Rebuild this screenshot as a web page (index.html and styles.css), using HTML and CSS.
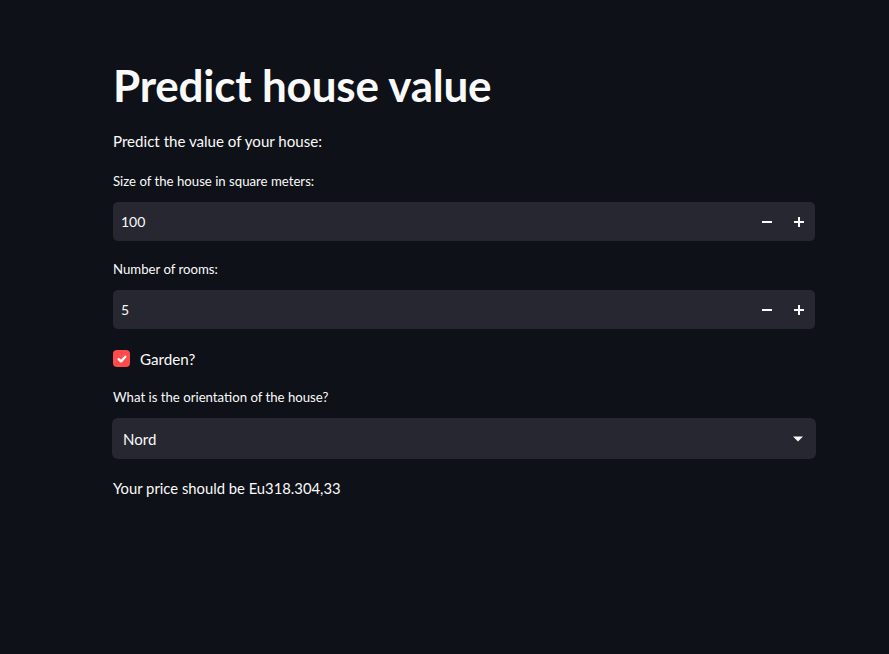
FILE: index.html
```html
<!DOCTYPE html>
<html>
<head>
<meta charset="utf-8">
<link rel="stylesheet" href="styles.css">
</head>
<body>
<main class="main">
  <h1 class="title">Predict house value</h1>
  <p class="intro">Predict the value of your house:</p>

  <div class="field">
    <label class="label">Size of the house in square meters:</label>
    <div class="number">
      <span class="number-value">100</span>
      <div class="steps">
        <button class="step"><svg width="10" height="10" viewBox="0 0 10 10"><rect x="0" y="4" width="10" height="2" fill="#fafafa"/></svg></button>
        <button class="step"><svg width="10" height="10" viewBox="0 0 10 10"><rect x="0" y="4" width="10" height="2" fill="#fafafa"/><rect x="4" y="0" width="2" height="10" fill="#fafafa"/></svg></button>
      </div>
    </div>
  </div>

  <div class="field">
    <label class="label">Number of rooms:</label>
    <div class="number">
      <span class="number-value">5</span>
      <div class="steps">
        <button class="step"><svg width="10" height="10" viewBox="0 0 10 10"><rect x="0" y="4" width="10" height="2" fill="#fafafa"/></svg></button>
        <button class="step"><svg width="10" height="10" viewBox="0 0 10 10"><rect x="0" y="4" width="10" height="2" fill="#fafafa"/><rect x="4" y="0" width="2" height="10" fill="#fafafa"/></svg></button>
      </div>
    </div>
  </div>

  <div class="check">
    <span class="box"><svg width="12" height="12" viewBox="0 0 12 12"><path d="M2.6 6.1 L5 8.4 L9.4 3.8" fill="none" stroke="#fff" stroke-width="2.3" stroke-linecap="round" stroke-linejoin="round"/></svg></span>
    <span class="check-label">Garden?</span>
  </div>

  <div class="field field-after-check">
    <label class="label">What is the orientation of the house?</label>
    <div class="select">
      <span class="select-value">Nord</span>
      <svg class="caret" width="10" height="6" viewBox="0 0 10 6"><path d="M0 0.5 H10 L5 5.5 Z" fill="#fafafa"/></svg>
    </div>
  </div>

  <p class="result">Your price should be Eu318.304,33</p>
</main>
</body>
</html>
```
FILE: styles.css
```css
html, body {
  margin: 0;
  padding: 0;
  background: #0e1117;
  color: #fafafa;
  font-family: "Lato", "Open Sans", sans-serif;
}
.main {
  width: 702px;
  padding: 57px 0 0 113px;
}
.title {
  margin: 0;
  font-size: 44px;
  font-weight: 700;
  line-height: 56px;
  letter-spacing: -0.2px;
}
.intro {
  margin: 16px 0 0;
  font-size: 15.1px;
  line-height: 24px;
}
.field {
  margin-top: 18px;
}
.field-after-check {
  margin-top: 20px;
}
.label {
  display: block;
  font-size: 13.2px;
  line-height: 20px;
  margin-bottom: 11px;
}
.number {
  height: 39px;
  background: #262730;
  border-radius: 5px;
  display: flex;
  align-items: center;
  justify-content: space-between;
  padding-left: 8px;
  box-sizing: border-box;
}
.number-value {
  font-size: 14px;
}
.steps {
  display: flex;
  height: 100%;
}
.step {
  width: 32px;
  height: 100%;
  background: transparent;
  border: 0;
  padding: 0;
  display: flex;
  align-items: center;
  justify-content: center;
}
.check {
  display: flex;
  align-items: center;
  margin-top: 21px;
  height: 17px;
}
.box {
  width: 17px;
  height: 17px;
  border-radius: 4px;
  background: #ff4b4b;
  display: flex;
  align-items: center;
  justify-content: center;
}
.check-label {
  margin-left: 10px;
  font-size: 15.2px;
}
.select {
  height: 41px;
  margin-left: -1px;
  margin-right: -1px;
  background: #262730;
  border-radius: 6px;
  display: flex;
  align-items: center;
  justify-content: space-between;
  padding: 0 13px 0 11px;
}
.select-value {
  font-size: 15px;
}
.result {
  margin: 19px 0 0;
  font-size: 14.8px;
  line-height: 20px;
}
```
